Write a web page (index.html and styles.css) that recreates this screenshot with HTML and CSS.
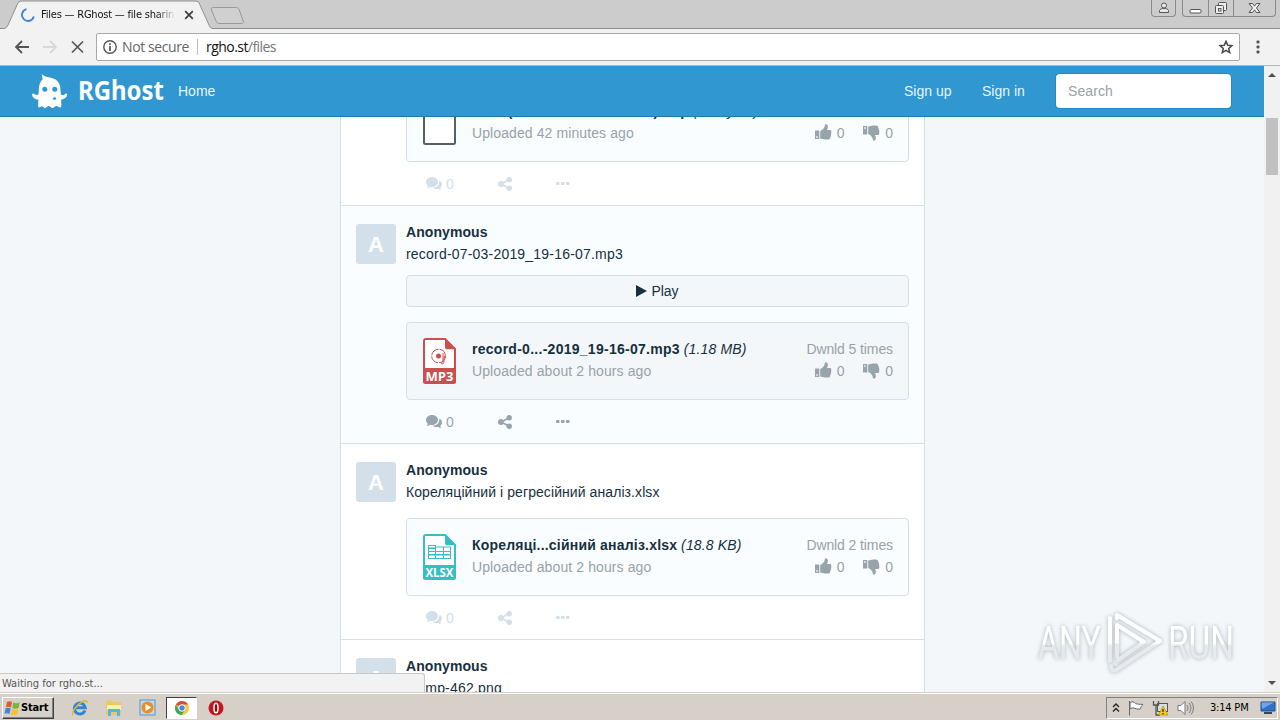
FILE: index.html
```html
<!DOCTYPE html>
<html lang="en">

<head>
    <meta charset="UTF-8">
    <meta name="viewport" content="width=device-width, initial-scale=1.0">
    <title>Files — RGhost — file sharing</title>
    <link rel="stylesheet" href="styles.css">
</head>

<body>

    <!-- shared icons -->
    <svg class="sprite" aria-hidden="true">
        <symbol id="comments" viewBox="0 0 16 14">
            <path d="M6 0C9.300 0 12 2.200 12 5s-2.700 5-6 5c-.8 0-1.500-.1-2.100-.3C3 10.500 1.800 10.900.6 11c.7-.7 1.100-1.300 1.200-2.200C.7 7.900 0 6.500 0 5c0-2.800 2.700-5 6-5z" />
            <path d="M13.200 3.600C15 4.400 16 5.800 16 7.500c0 1.400-.7 2.600-1.800 3.400.1.900.5 1.500 1.200 2.200-1.200-.1-2.300-.5-3.200-1.300-1.800.5-4.200.2-5.700-1C10.800 10.900 14 7.800 13.200 3.600z" />
        </symbol>
        <symbol id="share" viewBox="0 0 14 14">
            <path d="M3 7l8-4M3 7l8 4" stroke="currentColor" stroke-width="1.800" />
            <circle cx="2.900" cy="7" r="2.900" />
            <circle cx="11.200" cy="2.800" r="2.700" />
            <circle cx="11.200" cy="11.200" r="2.700" />
        </symbol>
        <symbol id="dots" viewBox="0 0 14 4">
            <rect x="0" y="0" width="3.500" height="3" rx=".8" />
            <rect x="5" y="0" width="3.500" height="3" rx=".8" />
            <rect x="10" y="0" width="3.500" height="3" rx=".8" />
        </symbol>
        <symbol id="thumb" viewBox="0 0 17 16">
            <path fill-rule="evenodd" d="M0 6.500h4.300V15H0zM1.200 12.300v1.500h1.500v-1.500z" />
            <path d="M5.200 7c1.500-.3 2.600-1.700 3.700-3 .7-.9.700-2.200 1.100-3.300.3-.8 2.900-.6 2.900 2 0 1.200-.6 2.200-.8 3.300h2.800c1.400 0 1.800 1.400 1.200 2.500.4.800.3 1.900-.2 2.500.2.900-.1 1.700-.7 2.200.1 1.500-.8 2.300-2.300 2.300h-2.500c-2.200 0-3.500-1-5.200-1z" />
        </symbol>
    </svg>

    <!-- browser window -->
    <div class="tabstrip">
        <div class="tab">
            <svg class="tab-shape" width="250" height="29" viewBox="0 0 250 29">
                <path d="M0 29V28.500H3.500C6 28.500 7 27 8 25L17 5C18.300 2 19 1 22 1H195C198 1 199 2 200 5L209 25C210 27.500 211 28.500 213 28.500H250V29" fill="#f2f2f2" stroke="#8f8f8f" />
                <path d="M213.500 7.500H235.500C237.500 7.500 238.500 8 239.300 10L243 20.500C243.700 22.500 243 23.500 241.500 23.500H220C217.500 23.500 216.800 23 216 21L211.500 10C210.700 8.500 211.500 7.500 213.500 7.500z" fill="#d0d0d0" stroke="#989898" />
            </svg>
            <svg class="spinner" width="14" height="14" viewBox="0 0 14 14">
                <path d="M5.500 1.100A6 6 0 1 0 12.800 8.500" fill="none" stroke="#4a80d8" stroke-width="1.900" />
            </svg>
            <span class="tab-title">Files — RGhost — file sharin</span>
            <svg class="tab-close" width="10" height="10" viewBox="0 0 10 10">
                <path d="M1.200 1.200l7.600 7.600M8.800 1.200L1.200 8.800" stroke="#3c3c3c" stroke-width="1.700" />
            </svg>
        </div>
        <div class="window-controls">
            <span class="wbtn user">
                <svg width="12" height="12" viewBox="0 0 12 12" fill="#e8e8e8" stroke="#555">
                    <circle cx="6" cy="3.500" r="2.500" />
                    <path d="M1.500 10.500v-2C2 6.800 4 6.500 6 6.500s4 .3 4.500 2v2z" />
                </svg>
            </span>
            <span class="wbtn-group">
                <span class="wbtn">
                    <svg width="13" height="12" viewBox="0 0 13 12"><rect x="1" y="7.500" width="11" height="3.500" rx="1" fill="#fff" stroke="#555" /></svg>
                </span>
                <span class="wbtn">
                    <svg width="14" height="14" viewBox="0 0 14 14" fill="#eee" stroke="#555">
                        <rect x="4.500" y="1.500" width="8" height="8" rx="1" />
                        <rect x="1.500" y="4.500" width="8" height="8" rx="1" />
                        <rect x="4.500" y="7.500" width="2.500" height="2.500" />
                    </svg>
                </span>
                <span class="wbtn wide">
                    <svg width="13" height="12" viewBox="0 0 13 12">
                        <path d="M1 1.500h3.500l2 2.600 2-2.600H12L8.500 6l3.500 4.500H8.500l-2-2.600-2 2.600H1L4.500 6z" fill="#eee" stroke="#555" />
                    </svg>
                </span>
            </span>
        </div>
    </div>

    <div class="toolbar">
        <svg width="16" height="14" viewBox="0 0 16 14" fill="none" stroke="#555" stroke-width="1.800">
            <path d="M15 7H2M8 1L2 7l6 6" />
        </svg>
        <svg width="16" height="14" viewBox="0 0 16 14" fill="none" stroke="#d8d8d8" stroke-width="1.800">
            <path d="M1 7h13M8 1l6 6-6 6" />
        </svg>
        <svg width="14" height="14" viewBox="0 0 14 14" fill="none" stroke="#555" stroke-width="1.700">
            <path d="M2 1.500l11 11M13 1.500l-11 11" />
        </svg>
        <div class="address">
            <svg width="14" height="14" viewBox="0 0 14 14">
                <circle cx="7" cy="7" r="6.200" fill="none" stroke="#555" stroke-width="1.400" />
                <path d="M7 3.200v1.700M7 6v5" stroke="#555" stroke-width="1.700" />
            </svg>
            <span class="not-secure">Not secure</span>
            <span class="url">rgho.st<span class="path">/files</span></span>
            <svg class="star" width="14" height="14" viewBox="0 0 14 14">
                <path d="M7 1.300l1.700 3.900 4.200.4-3.200 2.800 1 4.200L7 10.400l-3.700 2.200 1-4.200L1.100 5.600l4.200-.4z" fill="none" stroke="#4a4a4a" stroke-width="1.500" />
            </svg>
        </div>
        <svg class="kebab" width="4" height="14" viewBox="0 0 4 14" fill="#555">
            <rect x=".5" y=".5" width="3" height="3" rx="1" />
            <rect x=".5" y="5.500" width="3" height="3" rx="1" />
            <rect x=".5" y="10.500" width="3" height="3" rx="1" />
        </svg>
    </div>

    <div class="viewport">
        <div class="page">
            <nav class="navbar">
                <svg class="ghost" width="37" height="36" viewBox="0 0 37 36">
                    <path fill="#fff" d="M10.500 1C12.500 3 15 4 18.500 4.500 25 5.300 28.700 9 29.300 14.500l.5 7c1.600 1.200 3 .8 4.200-.6.900-.9 2.500-.1 2.200 1.200-.6 2.300-2.700 4.200-6.100 4.700l.3 5.400c0 2.300-1.300 2.900-3 1.600-1.400-1.300-2.600-1.200-3.900.2-1.300 1.300-2.600 1.300-3.900 0-1.300-1.300-2.500-1.300-3.800 0-1.300 1.200-2.400 1.200-3.500 0-1.100-1.100-2-.9-2.900 0-1.300 1-2.400.4-2.300-1.400l.3-5.800C4 26.300 1.800 24.700 1.100 22.200c-.3-1.300 1.200-2.100 2.200-1.200 1.200 1.200 2.700 1.400 4.200.3L8 14.500c.3-3.500 1.500-6 3.500-8C11.700 4.500 11 2.700 10.500 1z" />
                    <circle cx="13.800" cy="16.300" r="2.500" fill="#3097d1" />
                    <circle cx="23.800" cy="16.300" r="2.500" fill="#3097d1" />
                    <ellipse cx="23.500" cy="25.500" rx="1.600" ry="1.300" fill="#3097d1" />
                </svg>
                <svg class="brand" width="86" height="36" viewBox="0 0 86 36">
                    <text x="0" y="27" textLength="86" lengthAdjust="spacingAndGlyphs">RGhost</text>
                </svg>
                <a class="nav-link home">Home</a>
                <a class="nav-link signup">Sign up</a>
                <a class="nav-link signin">Sign in</a>
                <span class="search">Search</span>
            </nav>

            <main class="scroll-area">
                <div class="feed">

                    <article class="post first">
                        <div class="post-body">
                            <div class="card">
                                <svg class="file-icon" width="33" height="46" viewBox="0 0 33 46">
                                    <path d="M1 3v40c0 .8.5 1 1.500 1h28c1 0 1.500-.2 1.500-1V11L22 1H3C1.800 1 1 1.800 1 3z" fill="#fff" stroke="#565e66" stroke-width="2" />
                                </svg>
                                <div class="file-info">
                                    <div><b>letter(a list of u... and item).tmp</b> <i>(12 Bytes)</i></div>
                                    <div class="muted">Uploaded 42 minutes ago</div>
                                </div>
                                <div class="stats">
                                    <div class="votes">
                                        <span><svg class="up" width="17" height="16"><use href="#thumb" /></svg>0</span>
                                        <span><svg class="down" width="17" height="16"><use href="#thumb" /></svg>0</span>
                                    </div>
                                </div>
                            </div>
                            <div class="actions">
                                <span class="comments"><svg width="16" height="14"><use href="#comments" /></svg>0</span>
                                <svg class="share" width="14" height="14"><use href="#share" /></svg>
                                <svg class="more" width="14" height="4"><use href="#dots" /></svg>
                            </div>
                        </div>
                    </article>

                    <article class="post active">
                        <div class="avatar">A</div>
                        <div class="post-body">
                            <div class="author">Anonymous</div>
                            <div class="filename">record-07-03-2019_19-16-07.mp3</div>
                            <div class="play">
                                <svg width="11" height="12" viewBox="0 0 11 12"><path d="M0 0l11 6-11 6z" fill="#17303d" /></svg>
                                Play
                            </div>
                            <div class="card">
                                <svg class="file-icon" width="33" height="46" viewBox="0 0 33 46">
                                    <path d="M1 3v40.500c0 .8.500 1.500 1.500 1.500h28c1 0 1.500-.7 1.500-1.500V11L22 1H3C1.800 1 1 1.800 1 3z" fill="#fff" stroke="#c8504f" stroke-width="2" />
                                    <path d="M22 0v9c0 1.500.8 2.300 2 2.300h9zM0 30h33v13c0 1.200-.8 2-2 2H2c-1.200 0-2-.8-2-2z" fill="#c8504f" />
                                    <circle cx="15.500" cy="18" r="6.800" fill="none" stroke="#c8504f" stroke-dasharray="10 1" />
                                    <circle cx="15.500" cy="18" r="2.500" fill="#c8504f" />
                                    <path d="M20 15v9c-2 .2-2.500 1.500-1 2 1.300 0 2-.8 2-2v-5.500l2.200 1" fill="none" stroke="#c8504f" />
                                    <text x="2.500" y="42.500" textLength="28" lengthAdjust="spacingAndGlyphs">MP3</text>
                                </svg>
                                <div class="file-info">
                                    <div><b>record-0...-2019_19-16-07.mp3</b> <i>(1.18 MB)</i></div>
                                    <div class="muted">Uploaded about 2 hours ago</div>
                                </div>
                                <div class="stats">
                                    <div>Dwnld 5 times</div>
                                    <div class="votes">
                                        <span><svg class="up" width="17" height="16"><use href="#thumb" /></svg>0</span>
                                        <span><svg class="down" width="17" height="16"><use href="#thumb" /></svg>0</span>
                                    </div>
                                </div>
                            </div>
                            <div class="actions">
                                <span class="comments"><svg width="16" height="14"><use href="#comments" /></svg>0</span>
                                <svg class="share" width="14" height="14"><use href="#share" /></svg>
                                <svg class="more" width="14" height="4"><use href="#dots" /></svg>
                            </div>
                        </div>
                    </article>

                    <article class="post">
                        <div class="avatar">A</div>
                        <div class="post-body">
                            <div class="author">Anonymous</div>
                            <div class="filename cyr">Кореляційний і регресійний аналіз.xlsx</div>
                            <div class="card">
                                <svg class="file-icon" width="33" height="46" viewBox="0 0 33 46">
                                    <path d="M1 3v40.500c0 .8.500 1.500 1.500 1.500h28c1 0 1.500-.7 1.500-1.500V11L22 1H3C1.800 1 1 1.800 1 3z" fill="#fff" stroke="#35bfc3" stroke-width="2" />
                                    <path d="M22 0v9c0 1.500.8 2.300 2 2.300h9zM0 31h33v12c0 1.200-.8 2-2 2H2c-1.200 0-2-.8-2-2z" fill="#35bfc3" />
                                    <path d="M5 11h8v1.500h15V25H5z" fill="#35bfc3" />
                                    <path d="M6 12h6v1.500H6zM6 15h6v2H6zM13 13.500h7V17h-7zM21 13.500h6V17h-6zM6 18h6v2H6zM13 18h7v2h-7zM21 18h6v2h-6zM6 21.500h6V24H6zM13 21.500h7V24h-7zM21 21.500h6V24h-6z" fill="#fff" />
                                    <text x="2.500" y="42.500" textLength="28" lengthAdjust="spacingAndGlyphs">XLSX</text>
                                </svg>
                                <div class="file-info">
                                    <div><b class="cyr">Кореляці...сійний аналіз.xlsx</b> <i>(18.8 KB)</i></div>
                                    <div class="muted">Uploaded about 2 hours ago</div>
                                </div>
                                <div class="stats">
                                    <div>Dwnld 2 times</div>
                                    <div class="votes">
                                        <span><svg class="up" width="17" height="16"><use href="#thumb" /></svg>0</span>
                                        <span><svg class="down" width="17" height="16"><use href="#thumb" /></svg>0</span>
                                    </div>
                                </div>
                            </div>
                            <div class="actions">
                                <span class="comments"><svg width="16" height="14"><use href="#comments" /></svg>0</span>
                                <svg class="share" width="14" height="14"><use href="#share" /></svg>
                                <svg class="more" width="14" height="4"><use href="#dots" /></svg>
                            </div>
                        </div>
                    </article>

                    <article class="post">
                        <div class="avatar">A</div>
                        <div class="post-body">
                            <div class="author">Anonymous</div>
                            <div class="filename">stamp-462.png</div>
                        </div>
                    </article>

                </div>
            </main>
        </div>

        <div class="scrollbar">
            <span class="arrow up-arrow"></span>
            <span class="thumb"></span>
            <span class="arrow down-arrow"></span>
        </div>

        <div class="status">Waiting for rgho.st...</div>

        <svg class="watermark" width="204" height="72" viewBox="0 0 204 72">
            <defs>
                <linearGradient id="fade" x1="0" y1="0" x2="0" y2="1">
                    <stop offset=".5" stop-color="#fff" />
                    <stop offset=".56" stop-color="#e6eaec" />
                </linearGradient>
            </defs>
            <text x="4" y="52" textLength="63" lengthAdjust="spacingAndGlyphs" fill="url(#fade)">ANY</text>
            <text x="134" y="52" textLength="66" lengthAdjust="spacingAndGlyphs" fill="url(#fade)">RUN</text>
            <g fill="none" stroke="url(#fade)" stroke-width="4" stroke-linejoin="round" stroke-linecap="round">
                <path d="M83 50V18L110 35 84 53" />
                <path d="M76 54V11M83 11V8L126 34 85 61C81 65 77 64 77 59" />
            </g>
        </svg>
    </div>

    <!-- desktop taskbar -->
    <div class="taskbar">
        <div class="start">
            <svg width="17" height="16" viewBox="0 0 17 16">
                <path d="M3 2c2-1.200 3.500-1 5 0L7 7.500C5.500 6.500 4 6.300 2 7.200z" fill="#e8562a" />
                <path d="M9 2.500c2 1 4 1 6.500-.3L14.500 8c-2 1-4 1-6 0z" fill="#77b736" />
                <path d="M1.700 8.300c2-1 3.500-.8 5 .2L5.500 14c-1.500-1-3-1.200-5-.3z" fill="#3f86d9" />
                <path d="M8 9c2 1 4 1 6.200 0L13 14.500c-2 1-4 1-6.200 0z" fill="#f6c12e" />
            </svg>
            Start
        </div>
        <div class="launchers">
            <svg width="18" height="18" viewBox="0 0 18 18">
                <path d="M14 11.500A5.500 5.500 0 1 1 14.300 8.800H5" fill="none" stroke="#2f86d6" stroke-width="3" />
                <path d="M2 16C0 14 5 6 11 2.800c3-1.600 5.500-1.500 4.700 1.200" fill="none" stroke="#e5b52c" stroke-width="1.500" />
            </svg>
            <svg width="18" height="18" viewBox="0 0 18 18">
                <path d="M1 3l1-1.500h5L8.500 3H16v13H1z" fill="#e8c96a" />
                <path d="M2 6h14v5H2z" fill="#fbefae" />
                <path d="M3 10h12v7h-3v-4H6v4H3z" fill="#5db1dd" />
            </svg>
            <svg width="18" height="18" viewBox="0 0 18 18">
                <rect x="1" y="1" width="15" height="15" fill="#bcd9f3" stroke="#5a93c9" />
                <circle cx="8.500" cy="8.500" r="6" fill="#ee8c1d" />
                <path d="M6.500 5l6 3.500-6 3.500z" fill="#fff" />
            </svg>
            <span class="running">
                <svg width="16" height="16" viewBox="0 0 16 16">
                    <circle cx="8" cy="8" r="7" fill="#f9ca30" />
                    <path d="M8 8L1.900 4.500A7 7 0 0 1 14.100 4.600H8z" fill="#df4a3d" />
                    <path d="M8 8L4.700 9.500 1.900 4.500A7 7 0 0 0 7.700 15L11 10z" fill="#3fa757" />
                    <circle cx="8" cy="8" r="3.300" fill="#4a86e8" stroke="#fff" />
                </svg>
            </span>
            <svg width="16" height="16" viewBox="0 0 16 16">
                <circle cx="8" cy="8" r="7.500" fill="#c4161c" />
                <ellipse cx="8" cy="8" rx="2" ry="4.800" fill="#8b0d12" stroke="#fff" stroke-width="1.500" />
            </svg>
        </div>
        <div class="tray">
            <svg width="8" height="10" viewBox="0 0 8 10" fill="none" stroke="#222" stroke-width="1.300">
                <path d="M1 4l3-3 3 3M1 8.500l3-3 3 3" />
            </svg>
            <svg width="16" height="16" viewBox="0 0 16 16" fill="#fff" stroke="#666">
                <path d="M1.500 1v14.500M2 2.500c2-1 4-.8 5.500 1 2 1 4 .5 7.500 1-2 1.500-2 3-3 4.500-3 .8-5-1-6-1-1.500-.2-2.500 0-4 .8z" />
            </svg>
            <svg width="17" height="16" viewBox="0 0 17 16">
                <rect x="5.500" y="3.500" width="10" height="8" fill="#ddd" stroke="#555" />
                <path d="M1.500 1v4h5V1M4 5v10h4" fill="none" stroke="#555" stroke-width="1.300" />
                <path d="M11 6l5 9H6.500z" fill="#f3ca18" stroke="#a88900" stroke-width=".6" />
                <path d="M11 9v3M11 13v1.200" stroke="#222" stroke-width="1.200" />
            </svg>
            <svg width="17" height="16" viewBox="0 0 17 16" fill="none" stroke="#777">
                <path d="M1 5.500h3l4-4v13l-4-4H1z" fill="#fff" />
                <path d="M10 5c1.300 2 1.300 4 0 6M12 3c2.500 3 2.500 7 0 10M14 1.500c3.200 4 3.200 9 0 13" />
            </svg>
            <span class="clock">3:14 PM</span>
            <svg width="16" height="14" viewBox="0 0 16 14">
                <path d="M1 1h14v9H1z" fill="#2f72c9" stroke="#234f8c" />
                <path d="M1.500 1.500H14L2 8z" fill="#6da7e6" />
                <path d="M4 11h8v2H4z" fill="#34465c" />
            </svg>
        </div>
    </div>

</body>

</html>
```
FILE: styles.css
```css
* {
    box-sizing: border-box;
}

body {
    margin: 0;
    width: 1280px;
    height: 720px;
    overflow: hidden;
    display: flex;
    flex-direction: column;
    font-family: "Liberation Sans", Arial, sans-serif;
    font-size: 14px;
    line-height: 22px;
    color: #17303d;
}

svg {
    display: block;
    flex: none;
}

.sprite {
    display: none;
}

/* browser chrome */

.tabstrip {
    height: 29px;
    background: #ccc;
    border-bottom: 1px solid #8f8f8f;
    display: flex;
    justify-content: space-between;
    flex: none;
}

.tab {
    position: relative;
    width: 250px;
    height: 29px;
    padding-left: 21px;
    display: flex;
    align-items: center;
    font: 11px/14px "DejaVu Sans Condensed", "DejaVu Sans", sans-serif;
    color: #111;
}

.tab-shape {
    position: absolute;
    left: 0;
    top: 0;
}

.spinner,
.tab-title,
.tab-close {
    position: relative;
}

.tab-title {
    width: 135px;
    margin: 0 8px 0 6px;
    white-space: nowrap;
    letter-spacing: -.2px;
    -webkit-mask-image: linear-gradient(to right, #000 85%, transparent);
    mask-image: linear-gradient(to right, #000 85%, transparent);
}

.window-controls {
    display: flex;
    align-items: flex-start;
    gap: 6px;
    padding-right: 4px;
}

.wbtn {
    width: 25px;
    height: 16px;
    display: flex;
    justify-content: center;
    align-items: center;
}

.wbtn.user,
.wbtn-group {
    border: 1px solid #8a8a8a;
    border-top: 0;
    border-radius: 0 0 4px 4px;
    height: 17px;
}

.wbtn-group {
    display: flex;
}

.wbtn + .wbtn {
    border-left: 1px solid #8a8a8a;
}

.wbtn.wide {
    width: 42px;
}

.toolbar {
    height: 37px;
    background: #f2f2f2;
    border-bottom: 1px solid #b6b6b6;
    display: flex;
    align-items: center;
    padding: 0 20px 0 14px;
    gap: 12px;
    flex: none;
}

.address {
    flex: 1;
    height: 28px;
    background: #fff;
    border: 1px solid #a9a9a9;
    border-radius: 2px;
    display: flex;
    align-items: center;
    padding: 0 6px;
    font: 14px/20px "Open Sans", sans-serif;
    letter-spacing: -.4px;
    color: #666;
}

.not-secure {
    margin-left: 5px;
    padding-right: 8px;
    margin-right: 8px;
    border-right: 1px solid #bbb;
    line-height: 16px;
}

.url {
    color: #111;
    letter-spacing: -.55px;
}

.path {
    color: #777;
}

.star {
    margin-left: auto;
}

.kebab {
    margin-left: 4px;
}

/* page */

.viewport {
    position: relative;
    height: 626px;
    display: flex;
    flex: none;
}

.page {
    width: 1264px;
    background: #f3f7fa;
    display: flex;
    flex-direction: column;
}

.navbar {
    height: 51px;
    background: #3097d1;
    border-bottom: 1px solid #2379ad;
    display: flex;
    align-items: center;
    padding: 0 33px 0 31px;
    color: #e6f6ff;
    flex: none;
}

.brand {
    margin-left: 10px;
}

.brand text {
    font: bold 27px "Noto Sans", sans-serif;
    fill: #fff;
}

.home {
    margin-left: 14px;
}

.signup {
    margin-left: auto;
    width: 78px;
}

.signin {
    width: 74px;
}

.search {
    width: 175px;
    height: 34px;
    background: #fff;
    border-radius: 4px;
    padding: 0 12px;
    line-height: 34px;
    color: #98a2a9;
    letter-spacing: .1px;
    box-shadow: 0 0 0 1px #2a86bd;
}

.scroll-area {
    flex: 1;
    min-height: 0;
    overflow: hidden;
}

/* the list is scrolled part of the way down */
.feed {
    width: 585px;
    margin: -33px 0 0 340px;
    border: 1px solid #d3e0e9;
    border-width: 0 1px;
    background: #fff;
}

.post {
    display: flex;
    padding: 15px 15px 0;
    border-bottom: 1px solid #d3e0e9;
}

.post.first {
    padding: 0 15px 0 65px;
}

.post.active {
    background: #fafdff;
}

.avatar {
    width: 40px;
    height: 40px;
    margin: 3px 10px 0 0;
    background: #d3e0e9;
    border-radius: 3px;
    color: #fff;
    font: bold 22px/42px "Liberation Sans", sans-serif;
    text-align: center;
    flex: none;
}

.post-body {
    flex: 1;
}

.author {
    font-weight: bold;
    letter-spacing: .07px;
}

.filename {
    letter-spacing: .2px;
}

.filename.cyr {
    letter-spacing: .08px;
}

.play {
    height: 32px;
    margin-top: 10px;
    background: #f4f7fa;
    border: 1px solid #d3dde5;
    border-radius: 4px;
    display: flex;
    align-items: center;
    justify-content: center;
    gap: 4px;
}

.card {
    height: 78px;
    margin-top: 15px;
    padding: 15px;
    background: #fafdff;
    border: 1px solid #d3e0e9;
    border-radius: 4px;
    display: flex;
}

.first .card {
    margin-top: 0;
}

.active .card {
    background: #f4f7fa;
}

.file-icon {
    margin: 0 16px 0 1px;
}

.file-icon text {
    font: bold 13px "Open Sans", sans-serif;
    fill: #fff;
}

.file-info {
    flex: 1;
    white-space: nowrap;
}

.file-info b {
    letter-spacing: .27px;
}

.file-info .cyr {
    letter-spacing: .2px;
}

.file-info i {
    letter-spacing: .15px;
}

.muted {
    color: #98a2a9;
    letter-spacing: .1px;
}

.stats {
    color: #98a2a9;
    letter-spacing: -.1px;
    text-align: right;
}

.first .votes {
    margin-top: 22px;
}

.votes {
    display: flex;
    justify-content: flex-end;
    gap: 19px;
}

.votes span {
    display: flex;
    gap: 5px;
}

.votes svg {
    fill: #98a4ac;
    margin-top: 2px;
}

.votes .down {
    transform: scaleY(-1);
    margin-top: 3px;
}

.actions {
    height: 43px;
    padding-left: 20px;
    display: flex;
    align-items: center;
    color: #d3e0e9;
    fill: #d3e0e9;
}

.active .actions {
    color: #98a4ac;
    fill: #98a4ac;
}

.comments {
    display: flex;
    align-items: center;
    gap: 4px;
    width: 72px;
}

.more {
    margin-left: 44px;
}

.scrollbar {
    width: 16px;
    background: #f1f1f1;
    display: flex;
    flex-direction: column;
    align-items: center;
}

.thumb {
    width: 12px;
    height: 57px;
    margin-top: 41px;
    background: #c1c1c1;
}

.arrow {
    border: 4px solid transparent;
}

.up-arrow {
    border-top: 0;
    border-bottom-color: #505050;
    margin-top: 7px;
}

.down-arrow {
    border-bottom: 0;
    border-top-color: #505050;
    margin-top: auto;
    margin-bottom: 7px;
}

.status {
    position: absolute;
    left: 0;
    bottom: 0;
    width: 425px;
    height: 19px;
    background: #f2f2f2;
    border: 1px solid #c8c8c8;
    border-width: 1px 1px 0 0;
    border-radius: 0 3px 0 0;
    padding-left: 2px;
    font: 11px/19px "DejaVu Sans Condensed", "DejaVu Sans", sans-serif;
    color: #555;
}

.watermark {
    position: absolute;
    left: 1034px;
    top: 541px;
    filter: drop-shadow(0 0 2px rgba(120, 130, 140, .6));
}

.watermark text {
    font: 46px Roboto, sans-serif;
}

/* taskbar */

.taskbar {
    height: 28px;
    background: #d6d0c8;
    border-top: 1px solid #d6d0c8;
    box-shadow: inset 0 1px #fff;
    display: flex;
    align-items: center;
    padding: 3px 2px 1px;
    flex: none;
    color: #000;
    font: 11px/14px "DejaVu Sans Condensed", "DejaVu Sans", sans-serif;
}

.start {
    width: 52px;
    height: 22px;
    border: 1px solid;
    border-color: #fff #404040 #404040 #fff;
    box-shadow: inset -1px -1px #808080;
    display: flex;
    align-items: center;
    font-weight: bold;
    letter-spacing: -.15px;
    padding-left: 1px;
}

.launchers {
    display: flex;
    align-items: center;
    gap: 16px;
    margin-left: 17px;
}

.running {
    width: 31px;
    height: 22px;
    margin: 0 -5px 0 -7px;
    background: #fff;
    border: 1px solid;
    border-color: #404040 #fff #fff #404040;
    display: flex;
    align-items: center;
    justify-content: center;
}

.tray {
    width: 172px;
    height: 22px;
    margin-left: auto;
    border: 1px solid;
    border-color: #808080 #fff #fff #808080;
    display: flex;
    align-items: center;
    gap: 8px;
    padding-left: 5px;
}

.clock {
    margin: 0 4px 0 8px;
    letter-spacing: -.2px;
    white-space: nowrap;
}
```
